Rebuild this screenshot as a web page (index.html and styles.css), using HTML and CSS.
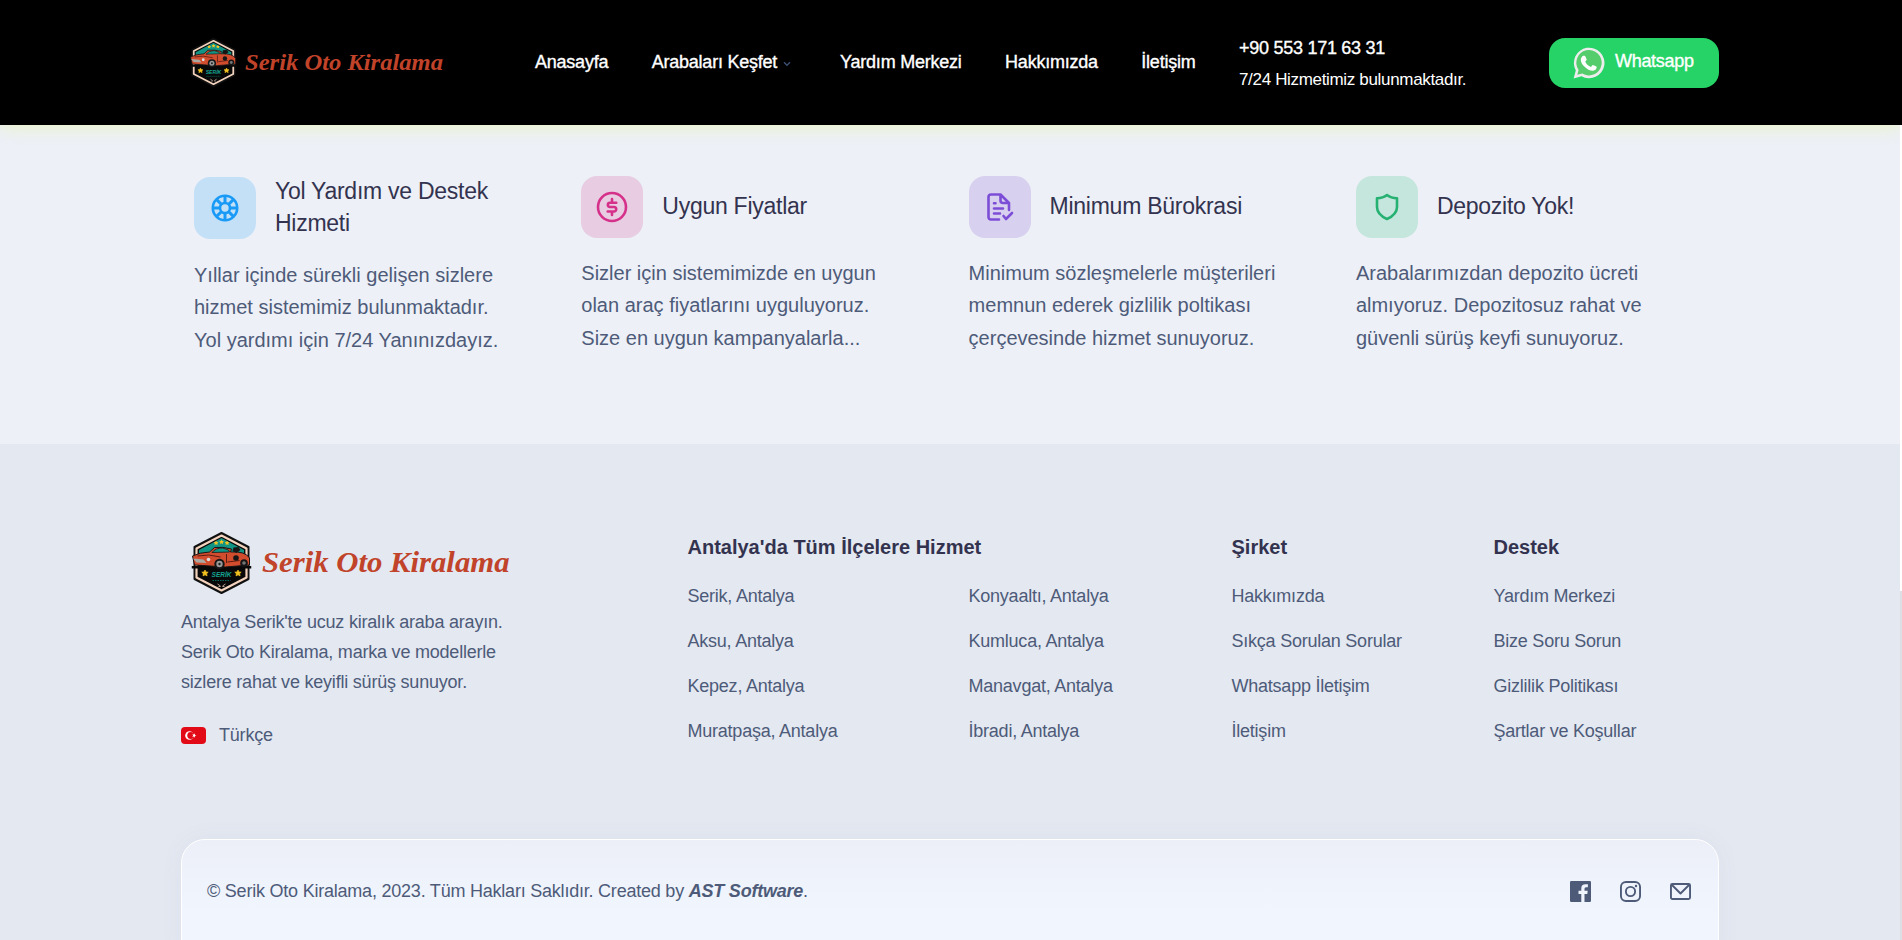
FILE: index.html
```html
<!DOCTYPE html>
<html lang="tr">
<head>
<meta charset="utf-8">
<title>Serik Oto Kiralama</title>
<link rel="stylesheet" href="styles.css">
</head>
<body>
<svg class="defs" width="0" height="0">
  <symbol id="badge" viewBox="0 0 60 62">
    <path d="M30 1 57 15V47L30 61 3 47V15Z" fill="#111" stroke="#111" stroke-width="2" stroke-linejoin="round"/>
    <path d="M30 3.500 55 16.500V45.500L30 58.500 5 45.500V16.500Z" fill="#080808" stroke="#f3d3bd" stroke-width="2.200" stroke-linejoin="round"/>
    <path d="M30 6 52.500 18V30H7.500V18Z" fill="#129484"/>
    <path d="M24.500 8.500l.8 1.500 1.700.2-1.200 1.200.3 1.700-1.600-.8-1.500.8.300-1.700-1.200-1.200 1.700-.2zM30 7.500l.8 1.500 1.700.2-1.200 1.200.3 1.700-1.600-.8-1.500.8.300-1.700-1.200-1.200 1.700-.2zM35.500 8.500l.8 1.500 1.700.2-1.200 1.200.3 1.700-1.600-.8-1.500.8.300-1.700-1.200-1.200 1.700-.2z" fill="#f5c321"/>
    <path d="M0 34H60V36.500H0Z" fill="#080808"/>
    <path d="M1 24Q8 20.500 18 20L23 15.500Q31 14.500 40 17L39 20Q54 19 58 26L58 33 34 35 3 33Z" fill="#d24c2e" stroke="#161616" stroke-width="1"/>
    <path d="M20.500 20.500Q24 16 31 16L37 18 38 20Z" fill="#129484" stroke="#161616" stroke-width=".8"/>
    <path d="M42 15.500 47 15 49 18 45 21 41 19Z" fill="#161616"/>
    <path d="M6 24Q17 21.500 29 25M35 22V31M36 30 48 28.500" fill="none" stroke="#5a1d12" stroke-width="1"/>
    <path d="M1.500 26.500 12 27.500 15 31 5 30.500Z" fill="#aaa8a3"/><circle cx="17" cy="27.500" r="1.800" fill="#ddd"/>
    <circle cx="28" cy="32" r="5.200" fill="#161616"/><circle cx="28" cy="32" r="3.200" fill="#999"/><circle cx="28" cy="32" r="1.200" fill="#222"/>
    <circle cx="44.500" cy="26" r="2.800" fill="#161616"/><circle cx="52.500" cy="31" r="3.800" fill="#161616"/><circle cx="52.500" cy="31" r="1.800" fill="#777"/>
    <path d="M13.500 38l1 2 2.200.2-1.600 1.500.5 2.200-2.100-1.100-2 1.100.4-2.200-1.600-1.500 2.200-.2zM46.500 38l1 2 2.200.2-1.600 1.500.5 2.200-2.100-1.100-2 1.100.4-2.200-1.600-1.500 2.200-.2z" fill="#f5c321" stroke="#f5c321" stroke-width=".7"/>
    <path d="M21 48.500H39" stroke="#0a675d" stroke-dasharray="1.500 1"/>
    <path d="M26 52l3 2M34 52l-3 2M27 54.500h2M31 54.500h2" stroke="#b79f91"/>
  </symbol>
</svg>

<header class="header">
  <div class="container header-row">
    <a class="logo">
      <svg class="logo-badge" viewBox="0 0 60 62"><use href="#badge"/><text x="30" y="45">SERİK</text></svg>
      <svg class="logo-name" viewBox="0 0 200 30"><text x="0" y="22" textLength="198" lengthAdjust="spacingAndGlyphs">Serik Oto Kiralama</text></svg>
    </a>
    <nav class="nav">
      <a>Anasayfa</a>
      <a>Arabaları Keşfet<svg class="caret" viewBox="0 0 8 6"><path d="M1 1.300 4 4.300 7 1.300"/></svg></a>
      <a>Yardım Merkezi</a>
      <a>Hakkımızda</a>
      <a>İletişim</a>
    </nav>
    <div class="phone"><strong>+90 553 171 63 31</strong><span>7/24 Hizmetimiz bulunmaktadır.</span></div>
    <a class="whatsapp">
      <svg viewBox="0 0 32 32"><path d="M.6 31.500 2.800 23.400A15.300 15.300 0 1 1 8.500 29.200Z" fill="#ededed"/><path d="M4.300 27.700 5.600 23A12.700 12.700 0 1 1 9.300 26.500Z" fill="#55cd6c"/><path d="M11.500 8.700c.5 0 .7.200.9.700l1.200 2.800c.2.500 0 .9-1.400 2.500 1.400 2.600 3.200 4.100 5.700 5.200.7-.4 1.400-1.900 1.900-1.900.6 0 3.300 1.400 3.800 1.800.4 1.900-1.500 3.800-3.600 4-2.500.2-5.900-1.300-8.700-4.200-2.200-2.300-3.500-4.500-3.500-6.600 0-2.200 1.400-4.100 2.300-4.300Z" fill="#fff"/></svg>
      <span>Whatsapp</span>
    </a>
  </div>
</header>

<section class="features">
  <article class="feature first">
    <div class="feature-head">
      <div class="tile blue"><svg viewBox="0 0 32 32"><circle cx="16" cy="16" r="12.200"/><circle cx="16" cy="16" r="5"/><path d="M16 4.500V11M16 21V27.500M4.500 16H11M21 16H27.500M7.900 7.900 12.300 12.300M19.700 19.700 24.100 24.100M24.100 7.900 19.700 12.300M12.300 19.700 7.900 24.100" stroke-width="3" stroke-linecap="butt"/></svg></div>
      <h3>Yol Yardım ve Destek Hizmeti</h3>
    </div>
    <p>Yıllar içinde sürekli gelişen sizlere<br>hizmet sistemimiz bulunmaktadır.<br>Yol yardımı için 7/24 Yanınızdayız.</p>
  </article>
  <article class="feature">
    <div class="feature-head">
      <div class="tile pink"><svg viewBox="0 0 32 32"><circle cx="16" cy="16" r="14"/><path d="M16 8V11.500M16 20.500V24M20.300 11.700H14a2.100 2.100 0 0 0 0 4.300h4a2.200 2.200 0 0 1 0 4.500H11.700"/></svg></div>
      <h3>Uygun Fiyatlar</h3>
    </div>
    <p>Sizler için sistemimizde en uygun<br>olan araç fiyatlarını uyguluyoruz.<br>Size en uygun kampanyalarla...</p>
  </article>
  <article class="feature">
    <div class="feature-head">
      <div class="tile purple"><svg viewBox="0 0 32 32"><path d="M15 28.500H7Q4.500 28.500 4.500 26V6Q4.500 3.500 7 3.500H16.500L25 12V19M16.500 4V9.500Q16.500 12 19 12H24.500M10 12.300H11.500M10 17.500H19M10 22.500H16M19.500 25 22 28 28 22"/></svg></div>
      <h3>Minimum Bürokrasi</h3>
    </div>
    <p>Minimum sözleşmelerle müşterileri<br>memnun ederek gizlilik poltikası<br>çerçevesinde hizmet sunuyoruz.</p>
  </article>
  <article class="feature">
    <div class="feature-head">
      <div class="tile green"><svg viewBox="0 0 32 32"><path d="M16 4Q20 7.200 26 7.200V16Q26 23.500 16 28 6 23.500 6 16V7.200Q12 7.200 16 4Z"/></svg></div>
      <h3>Depozito Yok!</h3>
    </div>
    <p>Arabalarımızdan depozito ücreti<br>almıyoruz. Depozitosuz rahat ve<br>güvenli sürüş keyfi sunuyoruz.</p>
  </article>
</section>

<footer class="footer">
  <div class="container footer-grid">
    <div class="about">
      <a class="logo big">
        <svg class="logo-badge" viewBox="0 0 60 62"><use href="#badge"/><text x="30" y="45">SERİK</text></svg>
        <svg class="logo-name" viewBox="0 0 200 30"><text x="0" y="22" textLength="198" lengthAdjust="spacingAndGlyphs">Serik Oto Kiralama</text></svg>
      </a>
      <p>Antalya Serik'te ucuz kiralık araba arayın.<br>Serik Oto Kiralama, marka ve modellerle<br>sizlere rahat ve keyifli sürüş sunuyor.</p>
      <div class="lang">
        <svg viewBox="0 0 25 17"><rect width="25" height="17" rx="4" fill="#e30a17"/><circle cx="8.500" cy="8.500" r="4.300" fill="#fff"/><circle cx="9.700" cy="8.500" r="3.400" fill="#e30a17"/><path d="M15.500 8.500 13.900 9.100 13.900 10.700 12.900 9.500 11.300 10 12.200 8.500 11.300 7 12.900 7.500 13.900 6.300 13.900 7.900Z" fill="#fff"/></svg>
        <span>Türkçe</span>
      </div>
    </div>
    <div class="links districts">
      <h4>Antalya'da Tüm İlçelere Hizmet</h4>
      <div class="two">
        <ul><li>Serik, Antalya</li><li>Aksu, Antalya</li><li>Kepez, Antalya</li><li>Muratpaşa, Antalya</li></ul>
        <ul><li>Konyaaltı, Antalya</li><li>Kumluca, Antalya</li><li>Manavgat, Antalya</li><li>İbradi, Antalya</li></ul>
      </div>
    </div>
    <div class="links">
      <h4>Şirket</h4>
      <ul><li>Hakkımızda</li><li>Sıkça Sorulan Sorular</li><li>Whatsapp İletişim</li><li>İletişim</li></ul>
    </div>
    <div class="links">
      <h4>Destek</h4>
      <ul><li>Yardım Merkezi</li><li>Bize Soru Sorun</li><li>Gizlilik Politikası</li><li>Şartlar ve Koşullar</li></ul>
    </div>
  </div>
  <div class="container copyright">
    <p>© Serik Oto Kiralama, 2023. Tüm Hakları Saklıdır. Created by <b>AST Software</b>.</p>
    <div class="social">
      <svg viewBox="0 0 21 21"><path d="M1.200 0H19.800Q21 0 21 1.200V19.800Q21 21 19.800 21H14.500V12.900H17.300L17.700 9.700H14.500V7.700Q14.500 6.200 16 6.200H17.900V3.300Q17 3.200 15.500 3.200 11.300 3.200 11.300 7.400V9.700H8.500V12.900H11.300V21H1.200Q0 21 0 19.800V1.200Q0 0 1.200 0Z" fill="#4d5b79"/></svg>
      <svg viewBox="0 0 21 21" fill="none" stroke="#4d5b79" stroke-width="1.900"><rect x=".95" y=".95" width="19.100" height="19.100" rx="5"/><circle cx="10.500" cy="10.500" r="4.600"/><circle cx="16" cy="5" r="1.200" fill="#4d5b79" stroke="none"/></svg>
      <svg viewBox="0 0 21 21" fill="none" stroke="#4d5b79" stroke-width="1.900" stroke-linejoin="round"><rect x=".95" y="3" width="19.100" height="15" rx="1.500"/><path d="M1.500 3.500 10.500 12.500 19.500 3.500"/></svg>
    </div>
  </div>
</footer>
<div class="scrollbar"></div>
</body>
</html>
```
FILE: styles.css
```css
* { box-sizing: border-box; }
html { height: 100%; overflow: hidden; }
body { margin: 0; height: 940px; overflow: hidden; background: #edf0f7; color: #4d5b79; font-family: "Liberation Sans", Arial, sans-serif; display: flex; flex-direction: column; }
h3, h4, p, ul { margin: 0; padding: 0; }
ul { list-style: none; }
svg { display: block; flex: none; }
.defs { position: absolute; }
.container { width: 1538px; margin-left: 181px; }

.header { height: 125px; flex: none; background: #000; box-shadow: 0 0 18px rgba(233, 246, 176, .85); }
.header-row { height: 125px; display: flex; align-items: center; }
.logo { display: flex; align-items: center; width: 354px; padding-left: 8px; gap: 7px; }
.logo-badge { width: 49px; height: 49px; }
.logo-badge text { font: italic 700 6.500px "Liberation Sans", sans-serif; text-anchor: middle; fill: #14a392; }
.logo-name { width: 200px; height: 30px; overflow: visible; }
.logo-name text { font-family: "Liberation Serif", serif; font-size: 23.500px; font-style: italic; font-weight: 700; fill: #c0432a; }
.nav { display: flex; gap: 43.500px; color: #fff; font-size: 18px; letter-spacing: -.23px; -webkit-text-stroke: .35px #fff; }
.nav a { display: flex; align-items: center; white-space: nowrap; height: 24px; }
.caret { width: 8px; height: 6px; margin: 3px 5.500px 0 6px; fill: none; stroke: #3c4d74; stroke-width: 1.400; }
.phone { margin-left: 43.500px; display: flex; flex-direction: column; color: #fff; font-size: 17px; letter-spacing: -.33px; line-height: 31px; white-space: nowrap; padding-top: 3px; }
.phone strong { font-weight: 400; font-size: 18px; letter-spacing: -.27px; -webkit-text-stroke: .35px #fff; }
.whatsapp { display: flex; width: 170px; height: 50px; margin-left: auto; padding-left: 24px; gap: 10px; align-items: center; background: #25d366; border-radius: 16px; color: #fff; font-size: 18px; letter-spacing: -.3px; -webkit-text-stroke: .35px #fff; }
.whatsapp svg { width: 32px; height: 32px; }
.whatsapp span { padding-bottom: 3px; }

.features { height: 319px; flex: none; padding: 51px 0 0 194px; display: grid; grid-template-columns: repeat(4, 387.300px); }
.feature-head { display: flex; align-items: center; gap: 19px; height: 62px; }
.first .feature-head { height: 64px; }
.feature h3 { width: 250px; padding-bottom: 2px; color: #33334f; font-size: 23px; letter-spacing: -.26px; font-weight: 400; line-height: 32px; }
.feature p { margin-top: 19px; font-size: 20px; line-height: 32.400px; white-space: nowrap; }
.tile { width: 62px; height: 62px; flex: none; border-radius: 16px; display: grid; place-items: center; }
.tile svg { width: 32px; height: 32px; fill: none; stroke: currentColor; stroke-width: 2.600; stroke-linecap: round; stroke-linejoin: round; }
.blue { background: #c4e0f7; color: #1a9af7; }
.pink { background: #e8cde2; color: #d6318a; }
.purple { background: #d8d0ef; color: #7c4dd6; }
.green { background: #c5e6dc; color: #25b172; }

.footer { flex: 1; background: #e4e8f1; padding-top: 82px; }
.footer-grid { display: grid; grid-template-columns: 506.500px 544px 262px 1fr; height: 313px; }
.logo.big { height: 74px; padding-left: 10px; gap: 10px; align-items: center; }
.big .logo-badge { width: 61px; height: 62px; }
.big .logo-name { width: 250px; height: 37.500px; }
.about p { margin-top: 7px; font-size: 18px; letter-spacing: -.21px; line-height: 30px; white-space: nowrap; }
.lang { display: flex; align-items: center; gap: 13px; margin-top: 27px; font-size: 18px; letter-spacing: -.2px; height: 22px; }
.lang svg { width: 25px; height: 17px; }
.links h4 { margin-top: 8px; color: #33334f; font-size: 20px; line-height: 26px; }
.links ul { margin-top: 14px; }
.links li { font-size: 18px; letter-spacing: -.23px; line-height: 45px; white-space: nowrap; }
.two { display: grid; grid-template-columns: 281px 1fr; }
.copyright { height: 130px; display: flex; justify-content: space-between; align-items: flex-start; padding: 41px 27px 0 25px; border: 1px solid #fff; border-radius: 24px; background: linear-gradient(#eceff7, #f1f6fe 60%); box-shadow: 0 0 25px rgba(77, 91, 121, .05); font-size: 18px; letter-spacing: -.22px; line-height: 21px; }
.copyright b { font-style: italic; }
.social { display: flex; gap: 29px; }
.social svg { width: 21px; height: 21px; }
.scrollbar { position: absolute; right: 0; top: 125px; width: 2px; height: 815px; background: linear-gradient(#fff 466px, #dcdee4 466px); }
```
